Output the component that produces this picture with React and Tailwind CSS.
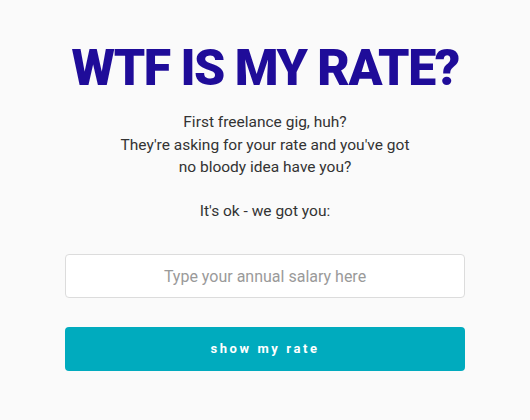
export default function App() {
  return (
    <div className="min-h-[420px] w-full bg-[#fafafa] flex flex-col items-center pt-[40px]" style={{ fontFamily: 'Roboto, "Noto Sans", sans-serif' }}>
      <h1 className="text-[50px] leading-[56px] font-black text-[#1f0c99] tracking-[-1.5px]">WTF IS MY RATE?</h1>
      <div className="mt-[15px] text-center text-[15.5px] leading-[22.5px] text-[#333] font-normal">
        <p>First freelance gig, huh?</p>
        <p>They're asking for your rate and you've got</p>
        <p>no bloody idea have you?</p>
        <p className="mt-[21px]">It's ok - we got you:</p>
      </div>
      <input
        type="text"
        placeholder="Type your annual salary here"
        className="mt-[32px] w-[400px] h-[44px] bg-white border border-[#dcdcdc] rounded-[4px] text-center text-[16px] text-[#333] placeholder:text-[#9a9a9a] outline-none"
      />
      <button className="mt-[29px] w-[400px] h-[44px] bg-[#00abbe] rounded-[4px] text-white font-bold text-[13px] tracking-[2.6px]">
        show my rate
      </button>
    </div>
  );
}
